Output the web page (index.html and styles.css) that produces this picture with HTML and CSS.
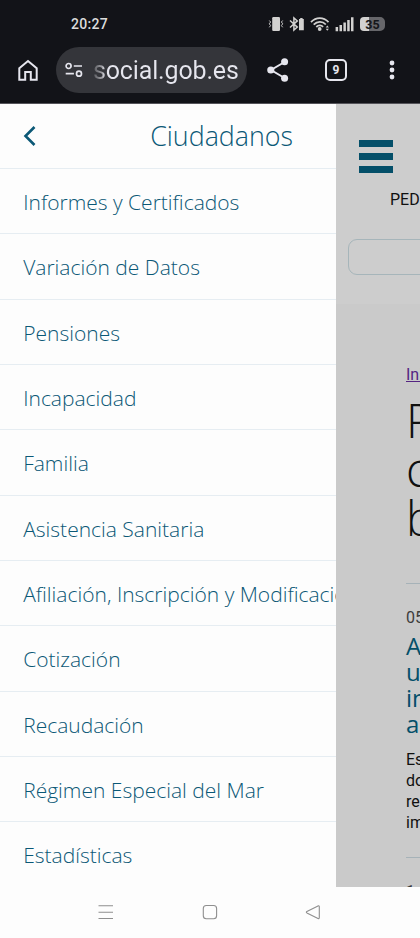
FILE: index.html
```html
<!DOCTYPE html>
<html lang="es">
<head>
<meta charset="utf-8">
<meta name="viewport" content="width=device-width, initial-scale=1">
<title>Ciudadanos</title>
<link rel="stylesheet" href="styles.css">
</head>
<body>
<div class="phone">
  <header class="chrome">
    <div class="status">
      <span class="clock">20:27</span>
      <div class="status-icons">
        <svg width="16" height="16" viewBox="0 0 16 16"><rect x="4.200" y="1" width="7.800" height="14" rx="1.200" fill="#d2d1d0"/><path d="M1.300 4.500l1.300 1.500-1.300 1.800 1.300 1.800-1.300 1.700M14.700 4.500L13.400 6l1.300 1.800-1.300 1.800 1.300 1.700" fill="none" stroke="#c5c5c5" stroke-width="1"/></svg>
        <svg width="16" height="16" viewBox="0 0 16 16"><path d="M1 4.500l7.300 6.600L4.900 14V2l3.400 2.900L1 11.500" fill="none" stroke="#d2d1d0" stroke-width="1.500"/><path d="M10 3h1.200V2h2.400v1h1.200v11.300H10z" fill="#d2d1d0"/></svg>
        <svg width="20" height="16" viewBox="0 0 20 16"><path d="M1 6.100C6 .8 13.500.8 18.500 6.100M3.700 8.700c3.500-3.800 8.800-3.800 12.100-.2M6.300 11c2.100-2.100 4.900-2.100 6.800-.2" fill="none" stroke="#d2d1d0" stroke-width="1.800"/><circle cx="9.700" cy="13" r="1.900" fill="#d2d1d0"/><path d="M15.700 11.500l1.600-2 1.600 2zM15.700 12.800l1.600 2 1.600-2z" fill="#d2d1d0"/></svg>
        <svg width="20" height="16" viewBox="0 0 20 16"><path d="M.6 11h2.500v4.200H.6zM4.500 9H7v6.200H4.500zM8.400 6.500h2.500v8.700H8.400zM12.200 4h2.500v11.200h-2.500zM16 1.200h2.500v14H16z" fill="#d2d1d0"/></svg>
        <div class="battery"><span>35</span></div>
      </div>
    </div>
    <div class="toolbar">
      <svg class="home" width="22" height="24" viewBox="0 0 22 24"><path d="M2.300 10.200L11 3l8.700 7.200v11.500h-5.900V14H8.200v7.700H2.300z" fill="none" stroke="#e6e6ee" stroke-width="2"/></svg>
      <div class="address">
        <svg width="18" height="16" viewBox="0 0 18 16" fill="none" stroke="#e6e6ee" stroke-width="1.700"><circle cx="3.600" cy="4" r="2.500"/><path d="M8.800 4H17M.7 11.700h8.200"/><circle cx="14" cy="11.700" r="2.500"/></svg>
        <span class="url">social.gob.es</span>
      </div>
      <svg class="share" width="24" height="26" viewBox="0 0 24 26"><path d="M18.600 5L5 13l13.600 8" fill="none" stroke="#e6e6ee" stroke-width="2"/><g fill="#e6e6ee"><circle cx="18.600" cy="4.700" r="3.500"/><circle cx="4.800" cy="13" r="3.600"/><circle cx="18.600" cy="21.300" r="3.500"/></g></svg>
      <div class="tabs">9</div>
      <svg class="more" width="6" height="22" viewBox="0 0 6 22" fill="#e6e6ee"><circle cx="3" cy="4" r="2.400"/><circle cx="3" cy="11" r="2.400"/><circle cx="3" cy="18" r="2.400"/></svg>
    </div>
  </header>
  <div class="view">
    <nav class="drawer">
      <div class="drawer-head">
        <svg width="14" height="22" viewBox="0 0 14 22"><path d="M11.500 2L2.500 11l9 9" fill="none" stroke="#0b5876" stroke-width="2.600"/></svg>
        <h2>Ciudadanos</h2>
      </div>
      <a class="item">Informes y Certificados</a>
      <a class="item">Variación de Datos</a>
      <a class="item">Pensiones</a>
      <a class="item">Incapacidad</a>
      <a class="item">Familia</a>
      <a class="item">Asistencia Sanitaria</a>
      <a class="item">Afiliación, Inscripción y Modificaciones</a>
      <a class="item">Cotización</a>
      <a class="item">Recaudación</a>
      <a class="item">Régimen Especial del Mar</a>
      <a class="item">Estadísticas</a>
    </nav>
    <main class="page">
      <div class="masthead">
        <div class="burger"><i></i><i></i><i></i></div>
        <div class="request">PEDIR</div>
        <div class="search"></div>
      </div>
      <div class="content">
        <a class="crumb">Inicio</a>
        <h1>P<br>c<br>b</h1>
        <article>
          <div class="date">05</div>
          <h3>A<br>u<br>in<br>a</h3>
          <p>Es<br>do<br>re<br>im</p>
        </article>
        <article class="next">
          <div class="date">1</div>
        </article>
      </div>
    </main>
  </div>
  <footer class="navbar">
    <svg width="16" height="16" viewBox="0 0 16 16"><path d="M.5 1.800h14.500M.5 8.200h14.500M.5 14.500h14.500" stroke="#8f8f8f" stroke-width="1.100"/></svg>
    <svg width="16" height="16" viewBox="0 0 16 16"><rect x="1.300" y="1.500" width="13.300" height="13.300" rx="3" fill="none" stroke="#8f8f8f" stroke-width="1.100"/></svg>
    <svg width="16" height="16" viewBox="0 0 16 16"><path d="M13 1.900L1.900 7.500q-1.100.7 0 1.400L13 14.500q1.300.4 1.300-.9V2.800q0-1.300-1.300-.9z" fill="none" stroke="#8f8f8f" stroke-width="1.100"/></svg>
  </footer>
</div>
</body>
</html>
```
FILE: styles.css
```css
* { box-sizing: border-box; }
body { margin: 0; background: #fdfdfd; font-family: Roboto, sans-serif; }
svg { display: block; flex: none; }
h1, h2, h3, p { margin: 0; }

.phone { width: 420px; height: 938px; display: flex; flex-direction: column; overflow: hidden; }

.chrome { height: 104px; flex: none; background: #121318; border-bottom: 1px solid #55545a; }
.status { height: 47px; padding: 0 35px 0 71px; display: flex; align-items: center; justify-content: space-between; }
.clock { color: #dcdcdc; font-size: 14px; font-weight: 500; letter-spacing: .3px; }
.status-icons { display: flex; align-items: center; gap: 5px; }
.battery { width: 25px; height: 14px; border-radius: 4px 5px 5px 4px; background: linear-gradient(90deg, #d2d1d0 37%, #66666a 37%); color: #15161a; font-size: 12.500px; font-weight: 700; line-height: 15px; text-align: center; }

.toolbar { height: 46px; padding-left: 17px; display: flex; align-items: center; }
.address { width: 191px; height: 46px; margin: 0 19px 0 17px; padding-left: 9px; border-radius: 23px; background: #34353a; display: flex; align-items: center; gap: 10px; }
.url { font-size: 25px; letter-spacing: -.15px; background: linear-gradient(90deg, #55565b, #a0a0a5 9px, #e6e6ee 12px); -webkit-background-clip: text; background-clip: text; color: transparent; }
.tabs { width: 22px; height: 22px; margin: 0 42px 0 35px; border: 2px solid #e6e6ee; border-radius: 5px; color: #e6e6ee; font-size: 12px; font-weight: 700; line-height: 18px; text-align: center; }

.view { flex: 1; min-height: 0; display: flex; overflow: hidden; }
.drawer { width: 336px; flex: none; overflow: hidden; background: #fdfdfd; font-family: "Open Sans", sans-serif; font-weight: 300; color: #0b5876; }
.drawer-head { height: 65px; padding: 0 43px 0 23px; border-bottom: 1px solid #e6edf2; display: flex; align-items: center; justify-content: space-between; }
.drawer-head h2 { padding-bottom: 2px; font-size: 26.8px; font-weight: 300; }
.item { display: block; height: 65.35px; padding-left: 23.200px; border-bottom: 1px solid #e6edf2; font-size: 21px; line-height: 67.500px; white-space: nowrap; }
.item:last-child { border-bottom: 0; }

.page { flex: 1; min-width: 0; overflow: hidden; background: #cacaca; color: #101010; }
.masthead { height: 200px; padding: 36px 0 0 12px; background: #cdcdcd; }
.burger { width: 34px; margin-left: 11px; display: grid; gap: 6px; }
.burger i { height: 7px; background: #044f69; }
.request { margin: 17px 0 0 42px; font-size: 16px; line-height: 20px; }
.search { width: 300px; height: 36px; margin-top: 29px; border: 1px solid #a6b5ba; border-radius: 9px; }
.content { width: 300px; padding: 60px 0 0 70px; }
.crumb { display: block; color: #542482; font-size: 16px; line-height: 22px; text-decoration: underline; }
.content h1 { margin-top: 10px; font-family: "Open Sans", sans-serif; font-size: 47px; font-weight: 300; line-height: 49px; }
.content article { margin-top: 40px; padding-top: 24px; border-top: 1px solid #a6b2b8; }
.date { color: #3c3c3c; font-size: 16px; line-height: 20px; }
.content h3 { margin-top: 5px; color: #044f69; font-family: "Open Sans", sans-serif; font-size: 24px; font-weight: 400; line-height: 26px; }
.content p { margin-top: 12px; font-size: 16px; line-height: 21px; }
.content .next { margin-top: 24px; }

.navbar { height: 51px; flex: none; padding: 0 99px 2px 98px; background: #fdfdfd; display: flex; align-items: center; justify-content: space-between; }
```
